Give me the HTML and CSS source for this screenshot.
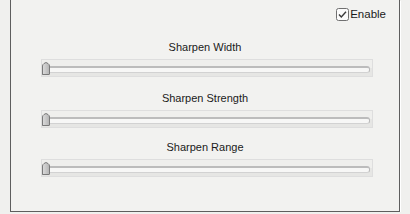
FILE: index.html
```html
<!DOCTYPE html>
<html>
<head>
<meta charset="utf-8">
<link rel="stylesheet" href="styles.css">
</head>
<body>
<div class="frame">
  <div class="enable-row">
    <label class="check">
      <svg class="box" width="13" height="13" viewBox="0 0 13 13">
        <rect x="0.5" y="0.5" width="12" height="12" rx="2" fill="#fbfbfb" stroke="#707070"/>
        <path d="M3 6.5 L5.3 9 L10 3.8" fill="none" stroke="#3a3a3a" stroke-width="1.4"/>
      </svg>
      <span>Enable</span>
    </label>
  </div>
  <div class="group g1">
    <div class="label">Sharpen Width</div>
    <div class="slider"><div class="rail"></div><svg class="thumb" width="8" height="13" viewBox="0 0 8 13"><defs><linearGradient id="tg" x1="0" y1="0" x2="1" y2="0"><stop offset="0" stop-color="#dcdcdc"/><stop offset="1" stop-color="#b4b4b4"/></linearGradient></defs><path d="M0.5 12.5 V4 Q0.5 2.5 2 1.5 L4 0.5 L6 1.5 Q7.5 2.5 7.5 4 V12 Q7.5 12.5 7 12.5 H1 Q0.5 12.5 0.5 12 Z" fill="url(#tg)" stroke="#7a7a7a"/></svg></div>
  </div>
  <div class="group g2">
    <div class="label">Sharpen Strength</div>
    <div class="slider"><div class="rail"></div><svg class="thumb" width="8" height="13" viewBox="0 0 8 13"><path d="M0.5 12.5 V4 Q0.5 2.5 2 1.5 L4 0.5 L6 1.5 Q7.5 2.5 7.5 4 V12 Q7.5 12.5 7 12.5 H1 Q0.5 12.5 0.5 12 Z" fill="url(#tg)" stroke="#7a7a7a"/></svg></div>
  </div>
  <div class="group g3">
    <div class="label">Sharpen Range</div>
    <div class="slider"><div class="rail"></div><svg class="thumb" width="8" height="13" viewBox="0 0 8 13"><path d="M0.5 12.5 V4 Q0.5 2.5 2 1.5 L4 0.5 L6 1.5 Q7.5 2.5 7.5 4 V12 Q7.5 12.5 7 12.5 H1 Q0.5 12.5 0.5 12 Z" fill="url(#tg)" stroke="#7a7a7a"/></svg></div>
  </div>
</div>
</body>
</html>
```
FILE: styles.css
```css
html, body {
  margin: 0;
  padding: 0;
  background: #f0f0ee;
  font-family: "Liberation Sans", Arial, sans-serif;
  font-size: 11px;
  color: #1a1a1a;
}
.frame {
  box-sizing: border-box;
  margin-left: 10px;
  width: 390px;
  height: 212px;
  border: 1px solid #5e5e5e;
  border-top: none;
  background: #f2f2f0;
  padding-top: 7px;
  box-shadow: 1px 1px 0 #ffffff;
}
.enable-row {
  display: flex;
  justify-content: flex-end;
  padding-right: 13px;
  height: 14px;
}
.check {
  display: flex;
  align-items: center;
  gap: 1px;
  font-size: 11.5px;
}
.check .box {
  display: block;
  margin-top: 1px;
}
.group {
  display: flex;
  flex-direction: column;
  margin-left: 30px;
  width: 332px;
}
.g1 { margin-top: 20px; }
.g2 { margin-top: 15px; }
.g3 { margin-top: 13px; }
.label {
  text-align: center;
  height: 13px;
  line-height: 13px;
  margin-bottom: 5px;
  padding-right: 4px;
}
.slider {
  position: relative;
  box-sizing: border-box;
  height: 18px;
  border: 1px solid #dedede;
  background: linear-gradient(#efefed 0%, #efefed 50%, #e6e6e4 50%, #e6e6e4 100%);
}
.rail {
  box-sizing: border-box;
  margin: 6px 2px 0 2px;
  height: 7px;
  border: 1px solid #b9b9b9;
  border-top: 2px solid #bcbcbc;
  border-bottom-color: #d2d2d2;
  border-radius: 3px;
  background: #f7f7f6;
}
.thumb {
  position: absolute;
  left: 0;
  top: 2px;
  display: block;
}
```
